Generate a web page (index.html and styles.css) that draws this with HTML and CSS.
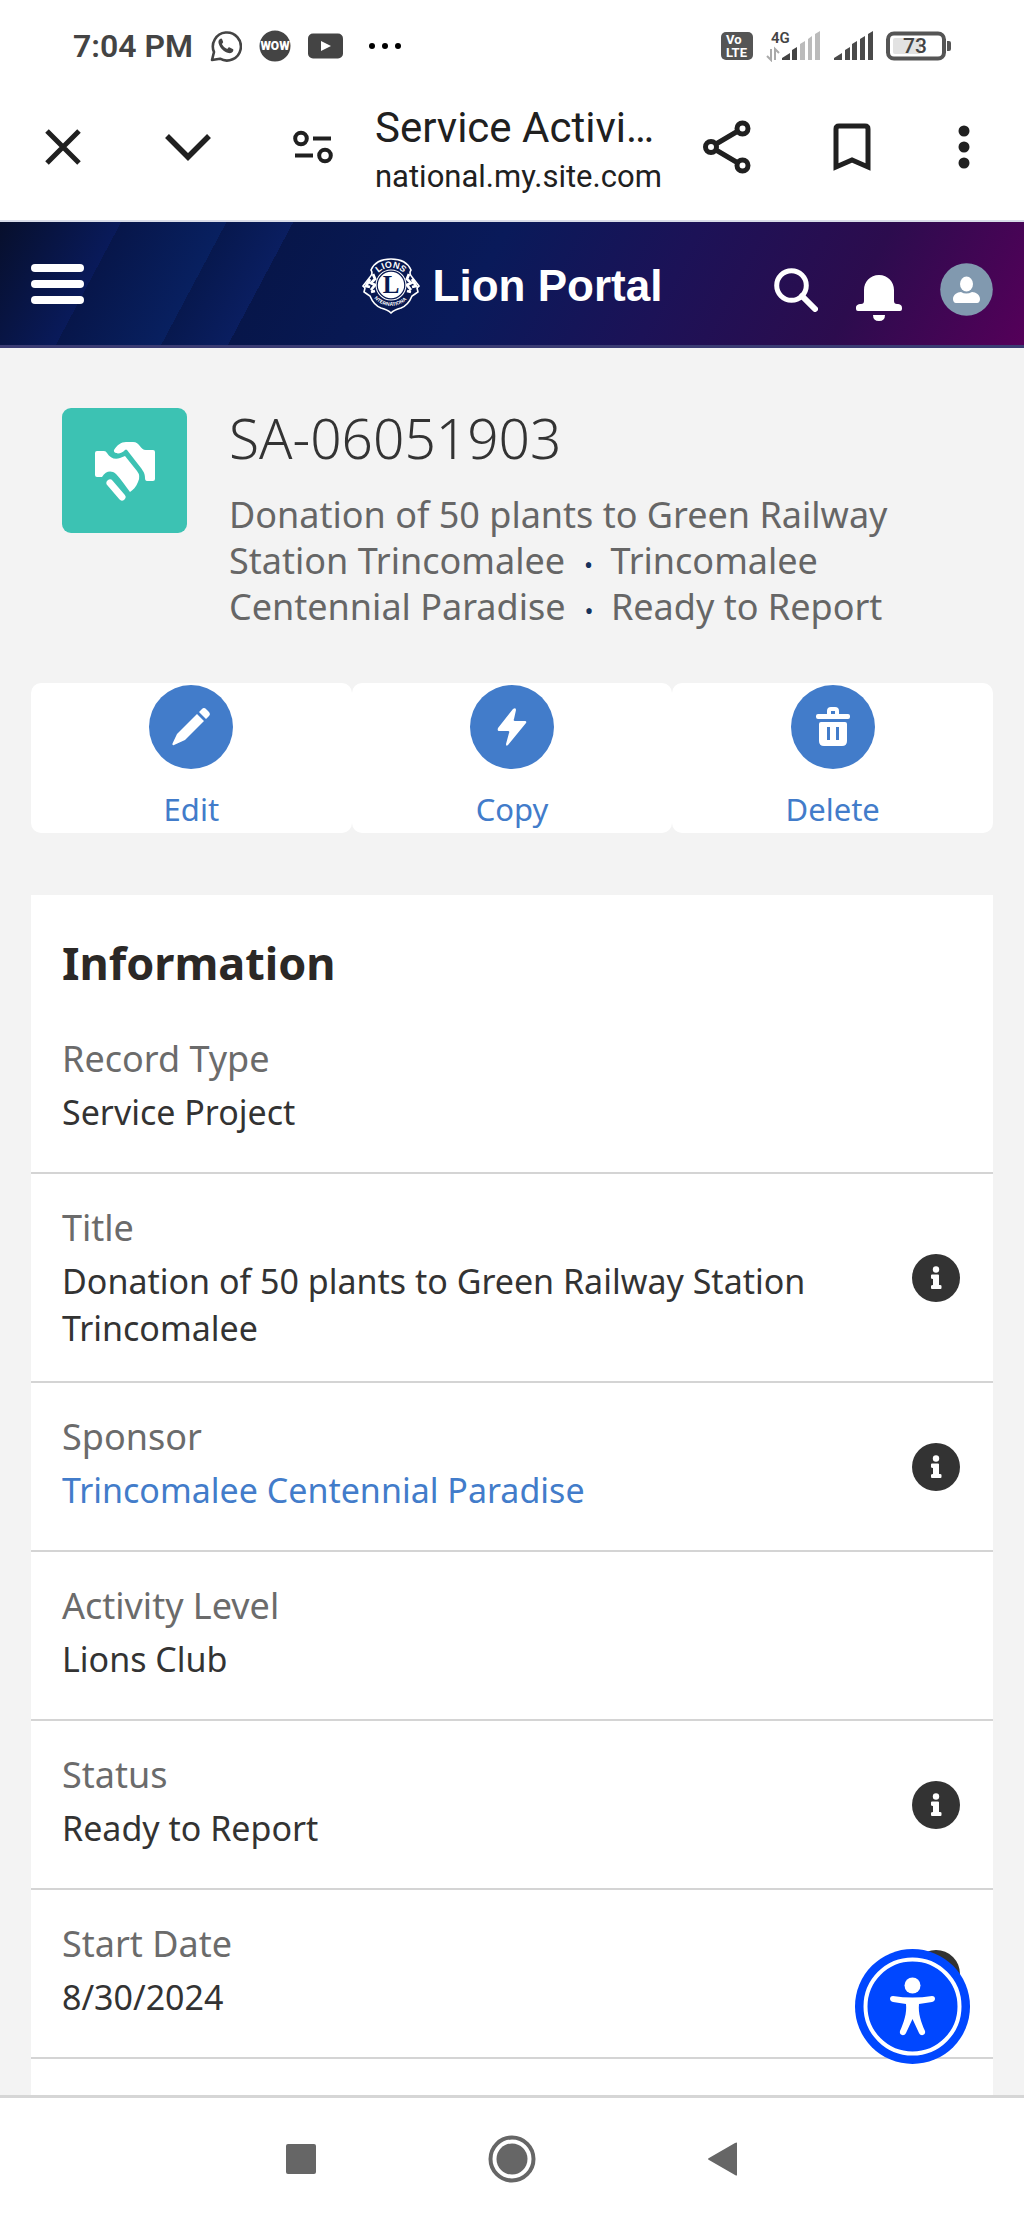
FILE: index.html
```
<!DOCTYPE html>
<html lang="en">
<head>
    <meta charset="UTF-8">
    <meta name="viewport" content="width=device-width, initial-scale=1.0">
    <title>Service Activity</title>
    <link rel="stylesheet" href="styles.css">
</head>
<body>
    <div class="status-bar">
        <div class="status-left">
            <span class="clock">7:04 PM</span>
            <svg width="32" height="32" viewBox="0 0 32 32">
                <path d="M2 30l2-8A14 14 0 1 1 10 28.700z" fill="none" stroke="#444" stroke-width="2.600" stroke-linejoin="round"/>
                <path d="M11 8.500c-2 .6-3 2.500-2.400 4.800 1.400 5 5.200 8.700 10 9.800 2.300.4 4.200-.7 4.700-2.700.2-.8 0-1.200-.6-1.500l-3-1.500c-.6-.3-1-.2-1.400.3l-1 1.300c-2.600-1-4.300-2.700-5.400-5l1-1.300c.3-.4.3-.8.1-1.300L12 9c-.2-.4-.5-.6-1-.5z" fill="#444"/>
            </svg>
            <svg width="32" height="32" viewBox="0 0 32 32">
                <circle cx="16" cy="16" r="15.500" fill="#444"/>
                <text x="16" y="20" class="wow-text" text-anchor="middle">WOW</text>
            </svg>
            <svg width="35" height="26" viewBox="0 0 35 26">
                <rect width="35" height="25" y=".5" rx="5" fill="#444"/>
                <path d="M13 8l10 5-10 5z" fill="#fff"/>
            </svg>
            <svg class="more-dots" width="34" height="8" viewBox="0 0 34 8">
                <circle cx="4" cy="4" r="3"/><circle cx="17" cy="4" r="3"/><circle cx="30" cy="4" r="3"/>
            </svg>
        </div>
        <div class="status-right">
            <svg width="32" height="30" viewBox="0 0 32 30">
                <rect y="1" width="32" height="28" rx="5" fill="#555"/>
                <text x="5" y="13" class="volte-text">Vo</text>
                <text x="5" y="26" class="volte-text">LTE</text>
            </svg>
            <svg width="55" height="32" viewBox="0 0 55 32">
                <text x="5" y="13" class="network-text">4G</text>
                <path d="M5 19v11l-4-4M9 30V19l4 4" fill="none" stroke="#aaa" stroke-width="2"/>
                <path d="M16 30v-2l8-5v7zM26 30V20l5-3v13z" fill="#444"/>
                <path d="M34 30V14l5-3v19zM42 30V9l4-3v24zM49 30V4l5-3v29z" fill="#bbb"/>
            </svg>
            <svg width="39" height="32" viewBox="0 0 39 32">
                <path d="M0 30v-2l8-5v7zM11 30V20l5-3v13zM18 30V14l5-3v19zM26 30V9l5-3v24zM34 30V4l5-3v29z" fill="#4a4a4a"/>
            </svg>
            <svg width="65" height="30" viewBox="0 0 65 30">
                <rect x="2" y="2.500" width="56" height="25" rx="6" fill="#fff" stroke="#555" stroke-width="4"/>
                <rect x="7" y="7" width="28" height="16" rx="2" fill="#e2e2e2"/>
                <path d="M61 10h2q2 0 2 2v6q0 2-2 2h-2z" fill="#555"/>
                <text x="29" y="22" class="battery-text" text-anchor="middle">73</text>
            </svg>
        </div>
    </div>

    <div class="browser-bar">
        <button class="browser-button" aria-label="Close">
            <svg width="36" height="36" viewBox="0 0 36 36"><path d="M2 2l32 32M34 2L2 34" stroke="#202020" stroke-width="5"/></svg>
        </button>
        <button class="browser-button" aria-label="Minimize">
            <svg width="46" height="28" viewBox="0 0 46 28"><path d="M2 3l21 21L44 3" fill="none" stroke="#202020" stroke-width="5.500"/></svg>
        </button>
        <button class="browser-button" aria-label="Site settings">
            <svg width="40" height="34" viewBox="0 0 40 34" fill="none" stroke="#202020" stroke-width="4">
                <circle cx="8" cy="8.500" r="5.800"/><circle cx="32" cy="25.500" r="5.800"/>
                <path d="M20 8.500h18M2 25.500h18"/>
            </svg>
        </button>
        <div class="page-info">
            <div class="page-title">Service Activi…</div>
            <div class="page-url">national.my.site.com</div>
        </div>
        <button class="browser-button" aria-label="Share">
            <svg width="48" height="54" viewBox="0 0 48 54" fill="none" stroke="#202020" stroke-width="5">
                <circle cx="8" cy="27" r="5.500"/><circle cx="39.500" cy="8.500" r="5.500"/><circle cx="39.500" cy="45.500" r="5.500"/>
                <path d="M13 24l22-13M13 30l22 13"/>
            </svg>
        </button>
        <button class="browser-button" aria-label="Bookmark">
            <svg width="38" height="48" viewBox="0 0 38 48"><path d="M3 44V6q0-3 3-3h26q3 0 3 3v38l-16-7z" fill="none" stroke="#202020" stroke-width="5"/></svg>
        </button>
        <button class="browser-button browser-menu" aria-label="Menu">
            <svg width="12" height="44" viewBox="0 0 12 44" fill="#202020"><circle cx="6" cy="6" r="5.500"/><circle cx="6" cy="22" r="5.500"/><circle cx="6" cy="38" r="5.500"/></svg>
        </button>
    </div>

    <header class="portal-header">
        <button class="icon-button" aria-label="Open menu">
            <svg width="53" height="40" viewBox="0 0 53 40" fill="#fff"><rect width="53" height="8" rx="4"/><rect y="16" width="53" height="8" rx="4"/><rect y="32" width="53" height="8" rx="4"/></svg>
        </button>
        <a class="brand" href="#">
            <svg width="58" height="56" viewBox="0 0 58 56">
                <path d="M29 1C39 1 46 5 49 12c-2 3-1 5 1 7l7 9-2 2 1 4-3 2-3 2c-2 5-6 10-11 12-4 1-7 2-10 5-3-3-6-4-10-5-5-2-9-7-11-12l-3-2-3-2 1-4-2-2 7-9c2-2 3-4 1-7C12 5 19 1 29 1z" fill="#081850" stroke="#fff" stroke-width="1.600"/>
                <path d="M11 16l2 5-4 4 4 2-4 5M8 21l-4 7 4 1M47 16l-2 5 4 4-4 2 4 5M50 21l4 7-4 1M9 34l4-1M49 34l-4-1" fill="none" stroke="#fff" stroke-width="2.800"/>
                <circle cx="29" cy="27" r="15.500" fill="#fff"/>
                <circle cx="29" cy="27" r="13.800" fill="none" stroke="#081850" stroke-width="1.200"/>
                <path id="arc-top" d="M15.500 16A17.500 17.500 0 0 1 42.500 16" fill="none"/>
                <path id="arc-bottom" d="M13 41A22 22 0 0 0 45 41" fill="none"/>
                <text class="badge-letter" x="29" y="35" text-anchor="middle">L</text>
                <text class="badge-top" text-anchor="middle"><textPath href="#arc-top" startOffset="50%">LIONS</textPath></text>
                <text class="badge-bottom" text-anchor="middle"><textPath href="#arc-bottom" startOffset="50%">INTERNATIONAL</textPath></text>
            </svg>
            <span>Lion Portal</span>
        </a>
        <div class="header-actions">
            <button class="icon-button" aria-label="Search">
                <svg width="44" height="44" viewBox="0 0 44 44" fill="none" stroke="#fff" stroke-width="5"><circle cx="17.500" cy="17.500" r="14.800"/><path d="M28 28l13 13" stroke-width="6" stroke-linecap="round"/></svg>
            </button>
            <button class="icon-button bell" aria-label="Notifications">
                <svg width="46" height="46" viewBox="0 0 46 46" fill="#fff"><path d="M23 0c9 0 15 7 15 15v11c0 2 1 3 3 3 3 0 5 1 5 4v1q0 2-2 2H2q-2 0-2-2v-1c0-3 2-4 5-4 2 0 3-1 3-3V15C8 7 14 0 23 0zM17 40h12q0 6-6 6t-6-6z"/></svg>
            </button>
            <button class="icon-button" aria-label="Profile">
                <svg width="53" height="53" viewBox="0 0 53 53"><circle cx="26.500" cy="26.500" r="26.300" fill="#8199af"/><ellipse cx="26.500" cy="21" rx="6.500" ry="7.500" fill="#fff"/><path d="M13 36c0-4 4-7 8-7q5 3 11 0c4 0 8 3 8 7 0 2-1 4-3 4H16c-2 0-3-2-3-4z" fill="#fff"/></svg>
            </button>
        </div>
    </header>

    <main>
        <section class="record-header">
            <div class="record-icon">
                <svg width="60" height="60" viewBox="0 0 60 60">
                    <path d="M2 10h7q2 0 3 2c3 5 8 7 13 5l5-2 12 15q4 5 1 11c-2 5-5 8-8 10-4-5-9-13-14-18-5-4-10-3-14 3H2q-2 0-2-2V12q0-2 2-2z" fill="#fff"/>
                    <path d="M19 9c3-5 7-8 12-8h7c7 0 7 8 13 8h7q2 0 2 2v27q0 2-2 2h-6q-2 0-2-3c0-5-2-7-4-10L32 9q-1-1-2 0c-4 5-12 4-11 0z" fill="#fff"/>
                    <path d="M15 42l12 14" stroke="#fff" stroke-width="7" stroke-linecap="round"/>
                </svg>
            </div>
            <div>
                <h1>SA-06051903</h1>
                <p>Donation of 50 plants to Green Railway Station Trincomalee<span class="dot">•</span> Trincomalee Centennial Paradise<span class="dot">•</span> Ready to Report</p>
            </div>
        </section>

        <div class="actions">
            <button class="action">
                <span class="action-icon">
                    <svg width="40" height="40" viewBox="0 0 40 40" fill="#fff"><path d="M26 7l7 7-19 19-11 5q-2 1-1.500-1.500L6 27zM28 5l3-3q2-2 4.500.5l2 2q2.500 2.500.5 4.500l-3 3z"/></svg>
                </span>
                Edit
            </button>
            <button class="action">
                <span class="action-icon">
                    <svg width="40" height="40" viewBox="0 0 40 40" fill="#fff"><path d="M21 2L6 21q-1 3 1 3h9q2 0 1 2l-3 11q0 3 2 1l18-22q1-2-1-2h-10q-2 0-1-2l2-9q0-3-3-1z"/></svg>
                </span>
                Copy
            </button>
            <button class="action">
                <span class="action-icon">
                    <svg width="40" height="40" viewBox="0 0 40 40" fill="#fff"><path fill-rule="evenodd" d="M5 7h9V4q0-4 4-4h4q4 0 4 4v3h9q2 0 2 2v1q0 2-2 2H5q-2 0-2-2V9q0-2 2-2zM18 7h4V4h-4zM8 15h24q2 0 2 2v17q0 5-5 5H11q-5 0-5-5V17q0-2 2-2zM14 20v13h3V20zM23 20v13h3V20z"/></svg>
                </span>
                Delete
            </button>
        </div>

        <section class="card">
            <h2>Information</h2>
            <div class="field first">
                <div>
                    <div class="label">Record Type</div>
                    <div class="value">Service Project</div>
                </div>
            </div>
            <div class="field">
                <div>
                    <div class="label">Title</div>
                    <div class="value">Donation of 50 plants to Green Railway Station Trincomalee</div>
                </div>
                <button class="icon-button" aria-label="Help Title">
                    <svg width="48" height="48" viewBox="0 0 48 48"><circle cx="24" cy="24" r="24" fill="#333"/><circle cx="24" cy="15.500" r="3.200" fill="#fff"/><path d="M20 20.500h6q1 0 1 1V31h1q1.500 0 1.500 1v2q0 1-1 1H20q-1 0-1-1v-2q0-1 2-1v-6q-2 0-2-1v-2.500q0-1 1-1z" fill="#fff"/></svg>
                </button>
            </div>
            <div class="field">
                <div>
                    <div class="label">Sponsor</div>
                    <div class="value"><a href="#">Trincomalee Centennial Paradise</a></div>
                </div>
                <button class="icon-button" aria-label="Help Sponsor">
                    <svg width="48" height="48" viewBox="0 0 48 48"><circle cx="24" cy="24" r="24" fill="#333"/><circle cx="24" cy="15.500" r="3.200" fill="#fff"/><path d="M20 20.500h6q1 0 1 1V31h1q1.500 0 1.500 1v2q0 1-1 1H20q-1 0-1-1v-2q0-1 2-1v-6q-2 0-2-1v-2.500q0-1 1-1z" fill="#fff"/></svg>
                </button>
            </div>
            <div class="field">
                <div>
                    <div class="label">Activity Level</div>
                    <div class="value">Lions Club</div>
                </div>
            </div>
            <div class="field">
                <div>
                    <div class="label">Status</div>
                    <div class="value">Ready to Report</div>
                </div>
                <button class="icon-button" aria-label="Help Status">
                    <svg width="48" height="48" viewBox="0 0 48 48"><circle cx="24" cy="24" r="24" fill="#333"/><circle cx="24" cy="15.500" r="3.200" fill="#fff"/><path d="M20 20.500h6q1 0 1 1V31h1q1.500 0 1.500 1v2q0 1-1 1H20q-1 0-1-1v-2q0-1 2-1v-6q-2 0-2-1v-2.500q0-1 1-1z" fill="#fff"/></svg>
                </button>
            </div>
            <div class="field">
                <div>
                    <div class="label">Start Date</div>
                    <div class="value">8/30/2024</div>
                </div>
                <button class="icon-button" aria-label="Help Start Date">
                    <svg width="48" height="48" viewBox="0 0 48 48"><circle cx="24" cy="24" r="24" fill="#333"/></svg>
                </button>
            </div>
        </section>
    </main>

    <button class="accessibility" aria-label="Accessibility">
        <svg width="115" height="115" viewBox="0 0 115 115">
            <circle cx="57.500" cy="57.500" r="57.500" fill="#0047ff"/>
            <circle cx="57.500" cy="57.500" r="47" fill="none" stroke="#fff" stroke-width="4"/>
            <circle cx="57.500" cy="36.500" r="8" fill="#fff"/>
            <path d="M38 47c13 2 26 2 39 0 4 0 4 5 0 6l-13 2c-1 9 2 18 6 27 1 4-4 6-6 2l-6.500-14-6.500 14c-2 4-7 2-6-2 4-9 7-18 6-27l-13-2c-4-1-4-6 0-6z" fill="#fff"/>
        </svg>
    </button>

    <nav class="system-nav">
        <button aria-label="Recent apps">
            <svg width="32" height="32" viewBox="0 0 32 32"><rect x="1" y="1" width="30" height="30" rx="2" fill="#666"/></svg>
        </button>
        <button aria-label="Home">
            <svg width="48" height="48" viewBox="0 0 48 48"><circle cx="24" cy="24" r="21.500" fill="none" stroke="#666" stroke-width="4"/><circle cx="24" cy="24" r="15.500" fill="#666"/></svg>
        </button>
        <button aria-label="Back">
            <svg width="32" height="36" viewBox="0 0 32 36"><path d="M30 2v32q0 1-2 0L2 19q-2-1 0-2L28 2q2-1 2 0z" fill="#666"/></svg>
        </button>
    </nav>
</body>
</html>
```
FILE: styles.css
```
* {
    box-sizing: border-box;
}
body {
    margin: 0;
    min-height: 100vh;
    display: flex;
    flex-direction: column;
    background-color: #f3f3f3;
    color: #333;
    font-family: "Noto Sans", sans-serif;
    font-size: 36px;
    line-height: 47px;
}
svg {
    display: block;
    flex-shrink: 0;
}
button {
    border: none;
    background: none;
    padding: 0;
    font: inherit;
    color: inherit;
    cursor: pointer;
}
a {
    color: #427cca;
    text-decoration: none;
}

/* phone status bar */
.status-bar {
    display: flex;
    justify-content: space-between;
    align-items: center;
    height: 92px;
    padding: 0 73px;
    background-color: #fff;
    font-family: Roboto, sans-serif;
}
.status-left {
    display: flex;
    align-items: center;
    gap: 17px;
}
.status-right {
    display: flex;
    align-items: center;
    gap: 13px;
}
.clock {
    font-size: 32px;
    font-weight: 600;
    color: #444;
}
.more-dots {
    margin-left: 8px;
}
.wow-text {
    font-size: 12px;
    font-weight: 900;
    fill: #fff;
}
.volte-text {
    font-size: 13px;
    font-weight: 700;
    fill: #fff;
}
.network-text {
    font-size: 15px;
    font-weight: 600;
    fill: #444;
}
.battery-text {
    font-size: 21px;
    font-weight: 500;
    fill: #444;
}

/* browser toolbar */
.browser-bar {
    display: flex;
    height: 130px;
    padding-right: 10px;
    border-bottom: 2px solid #d8dce8;
    background-color: #fff;
    font-family: Roboto, sans-serif;
    color: #202020;
}
.browser-button {
    display: flex;
    justify-content: center;
    align-items: center;
    width: 125px;
    height: 110px;
    flex-shrink: 0;
}
.browser-menu {
    width: 100px;
}
.page-info {
    flex: 1;
    min-width: 0;
    padding-top: 12px;
    white-space: nowrap;
}
.page-title {
    font-size: 42px;
    line-height: 48px;
}
.page-url {
    font-size: 31px;
    line-height: 50px;
}

/* portal header */
.portal-header {
    display: grid;
    grid-template-columns: 1fr auto 1fr;
    align-items: center;
    height: 126px;
    padding: 0 31px;
    border-bottom: 3px solid #3b3c73;
    background: linear-gradient(118deg, #070f2c 0, #091a5a 107px, #07164a 107px, #082060 200px, #07184e 200px, #0a1e60 259px, #07164a 259px, #091a5a 450px, #1c1257 620px, #2c0c4e 790px, #540059 959px) no-repeat border-box;
}
.icon-button {
    justify-self: start;
    flex-shrink: 0;
}
.brand {
    display: flex;
    align-items: center;
    gap: 13px;
    padding-top: 4px;
    color: #fff;
    font-family: "Liberation Sans", sans-serif;
    font-size: 44px;
    font-weight: bold;
}
.badge-letter {
    font-family: "Liberation Serif", serif;
    font-size: 25px;
    font-weight: bold;
    fill: #081850;
}
.badge-top {
    font-family: "Liberation Sans", sans-serif;
    font-size: 9px;
    fill: #fff;
}
.badge-bottom {
    font-family: "Liberation Sans", sans-serif;
    font-size: 5px;
    fill: #fff;
}
.header-actions {
    display: flex;
    justify-content: flex-end;
    align-items: center;
    gap: 38px;
    padding-top: 12px;
}
.bell {
    padding-top: 16px;
}

/* record */
main {
    flex: 1;
    display: flex;
    flex-direction: column;
    padding: 60px 31px 0;
}
.record-header {
    display: flex;
    gap: 42px;
    padding: 0 31px;
}
.record-icon {
    display: flex;
    justify-content: center;
    align-items: center;
    flex-shrink: 0;
    width: 125px;
    height: 125px;
    border-radius: 9px;
    background-color: #3cc2b3;
}
h1 {
    margin: 0;
    font-size: 55px;
    font-weight: 300;
    line-height: 60px;
}
.record-header p {
    margin: 24px 0 0;
    color: #666;
    line-height: 46px;
}
.dot {
    margin: 0 8px 0 19px;
    color: #16325c;
    font-size: 24px;
    line-height: 24px;
}
.actions {
    display: flex;
    margin-top: 53px;
}
.action {
    flex: 1;
    display: flex;
    flex-direction: column;
    align-items: center;
    height: 150px;
    padding-top: 2px;
    border-radius: 10px;
    background-color: #fff;
    color: #427cca;
    font-size: 31px;
    line-height: 42px;
}
.action-icon {
    display: flex;
    justify-content: center;
    align-items: center;
    width: 84px;
    height: 84px;
    margin-bottom: 19px;
    border-radius: 50%;
    background-color: #427cca;
}

/* information card */
.card {
    flex: 1;
    margin-top: 62px;
    background-color: #fff;
}
h2 {
    margin: 0;
    padding: 37px 31px 0;
    color: #2b2826;
    font-size: 45px;
    line-height: 62px;
}
.field {
    display: flex;
    justify-content: space-between;
    align-items: center;
    padding: 30px 33px 29px 31px;
    border-bottom: 2px solid #d4d4d4;
}
.field.first {
    padding-top: 41px;
}
.label {
    margin-bottom: 7px;
    color: #6b6b6b;
}
.value {
    min-height: 54px;
    font-size: 34px;
}

.accessibility {
    position: fixed;
    right: 54px;
    bottom: 155px;
}

/* android navigation */
.system-nav {
    position: sticky;
    bottom: 0;
    display: flex;
    justify-content: center;
    height: 124px;
    border-top: 3px solid #d6d6d6;
    background-color: #fff;
}
.system-nav button {
    display: flex;
    justify-content: center;
    align-items: center;
    width: 211px;
}
```
